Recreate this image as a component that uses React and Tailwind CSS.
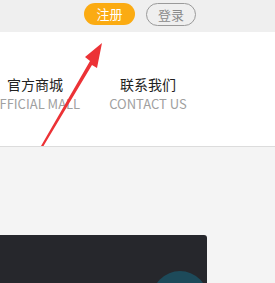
export default function App() {
  const font = { fontFamily: '"Microsoft YaHei","Noto Sans CJK SC",sans-serif' };
  return (
    <div className="relative w-[275px] h-[283px] overflow-hidden bg-[#f4f4f4]" style={font}>
      <div className="h-[32px] bg-[#efefef] flex items-start pt-[3px] pl-[84px] gap-[11px]">
        <div className="w-[51px] h-[22px] rounded-full bg-[#fbab12] text-white text-[13px] leading-[22px] text-center">注册</div>
        <div className="w-[50px] h-[23px] rounded-full border border-[#9a9a9a] text-[#8a8a8a] text-[13px] leading-[21px] text-center">登录</div>
      </div>
      <div className="h-[115px] bg-white border-b border-[#dcdcdc] flex items-start pt-[43px] ml-[-15px] gap-[13px]">
        <div className="w-[100px] flex flex-col items-center">
          <div className="text-[14px] leading-[19px] text-[#222]">官方商城</div>
          <div className="text-[13px] leading-[17px] text-[#a0a0a0] mt-[1px] whitespace-nowrap">OFFICIAL MALL</div>
        </div>
        <div className="w-[100px] flex flex-col items-center">
          <div className="text-[14px] leading-[19px] text-[#222]">联系我们</div>
          <div className="text-[13px] leading-[17px] text-[#a0a0a0] mt-[1px] whitespace-nowrap">CONTACT US</div>
        </div>
      </div>
      <div className="pt-[88px]">
        <div className="relative w-[207px] h-[60px] bg-[#26272c] rounded-tr-[3px] overflow-hidden">
          <div className="absolute left-[152px] top-[36px] w-[56px] h-[56px] rounded-full bg-[#1d4a5a]" />
        </div>
      </div>
      <svg className="absolute left-0 top-0" width="275" height="283" viewBox="0 0 275 283">
        <polygon points="41,146 43.5,146 92,65 97,68 102,43 85,57 90,61" fill="#ec3236" />
      </svg>
    </div>
  );
}
